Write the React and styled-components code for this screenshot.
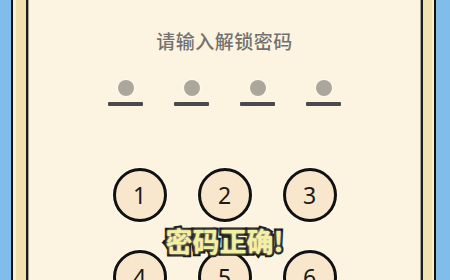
import styled, { createGlobalStyle } from "styled-components"

const GlobalStyle = createGlobalStyle`
    html, body {
        margin:0;
        padding:0;
        background-color:#80bdea;
        overflow:hidden;
    }
    body {
        font-family:"Noto Sans", "Noto Sans CJK SC", sans-serif;
    }
`

const Page = styled.div`
    width:450px;
    height:280px;
    overflow:hidden;
    display:flex;
    padding-left:11px;
    box-sizing:border-box;
`

const Phone = styled.div`
    width:425px;
    height:100%;
    box-sizing:border-box;
    border-left:2px solid #111;
    border-right:2px solid #111;
    background-color:#f1e1ae;
    box-shadow:inset 3px 0 0 #f8f0cf, inset -2px 0 0 #f8f0cf;
    padding:0 11px 0 13px;
    display:flex;
`

const Screen = styled.div`
    flex:1;
    box-sizing:border-box;
    border-left:2px solid #1c1c1c;
    border-right:2px solid #1c1c1c;
    background-color:#fcf4e0;
    box-shadow:inset 1px 0 0 #a9a393, inset -1px 0 0 #a9a393;
    display:flex;
    flex-direction:column;
    align-items:center;
    position:relative;
`

const Title = styled.h1`
    margin:29px 0 0 0;
    font-family:"Noto Sans CJK SC", sans-serif;
    font-size:19px;
    line-height:24px;
    font-weight:500;
    color:#737171;
    letter-spacing:0.5px;
`

const Slots = styled.div`
    display:flex;
    gap:31px;
    margin-top:27px;
`

const Slot = styled.div`
    width:35px;
    display:flex;
    flex-direction:column;
    align-items:center;
    gap:6px;
`

const Dot = styled.div`
    width:16px;
    height:16px;
    border-radius:50%;
    background-color:${(p) => (p.filled ? "#444" : "#aba79c")};
    box-shadow:0 0 0 1px #fffaf0;
`

const Line = styled.div`
    width:35px;
    height:4px;
    background-color:#4a4a4c;
    border-radius:1px;
`

const Keypad = styled.div`
    display:grid;
    grid-template-columns:repeat(3, 54px);
    column-gap:31px;
    row-gap:28px;
    margin-top:62px;
`

const Key = styled.button`
    width:54px;
    height:54px;
    border-radius:50%;
    border:3px solid #111;
    background-color:#f8e7cd;
    box-shadow:0 0 0 1px #fffaf0;
    box-sizing:border-box;
    font-family:"Noto Sans", sans-serif;
    font-size:23px;
    color:#1a1a1a;
    display:flex;
    align-items:center;
    justify-content:center;
    padding:0;
`

const Toast = styled.div`
    position:absolute;
    top:223px;
    left:0;
    right:0;
    text-align:center;
    font-family:"Noto Sans CJK SC", sans-serif;
    font-size:27px;
    line-height:36px;
    font-weight:bold;
    color:#f4f0a2;
    -webkit-text-stroke:5px #111;
    paint-order:stroke fill;
    text-shadow:0 0 3px #fffbe0;
`

const App = () => {
    const keys = ["1", "2", "3", "4", "5", "6", "7", "8", "9"]

    return (
        <>
            <GlobalStyle />
            <Page>
                <Phone>
                    <Screen>
                        <Title>请输入解锁密码</Title>
                        <Slots>
                            {[0, 1, 2, 3].map((i) => (
                                <Slot key={i}>
                                    <Dot />
                                    <Line />
                                </Slot>
                            ))}
                        </Slots>
                        <Keypad>
                            {keys.map((k) => (
                                <Key key={k}>{k}</Key>
                            ))}
                        </Keypad>
                        <Toast>密码正确!</Toast>
                    </Screen>
                </Phone>
            </Page>
        </>
    )
}

export default App
